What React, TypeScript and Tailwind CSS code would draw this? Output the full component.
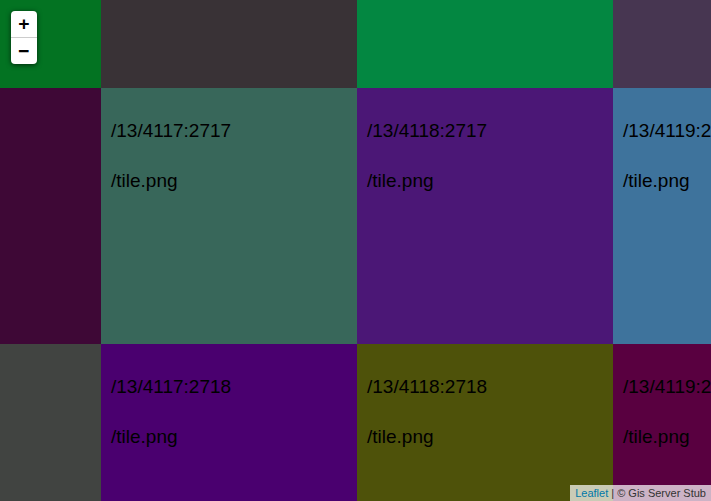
import React from "react";

type Tile = { bg: string; label?: string };

const rows: { h: string; tiles: Tile[] }[] = [
  {
    h: "h-[88px]",
    tiles: [
      { bg: "bg-[#037322]" },
      { bg: "bg-[#393236]" },
      { bg: "bg-[#038741]" },
      { bg: "bg-[#473651]" },
    ],
  },
  {
    h: "h-[256px]",
    tiles: [
      { bg: "bg-[#3e0836]" },
      { bg: "bg-[#38675a]", label: "/13/4117:2717" },
      { bg: "bg-[#4b1776]", label: "/13/4118:2717" },
      { bg: "bg-[#3e739c]", label: "/13/4119:2717" },
    ],
  },
  {
    h: "h-[157px]",
    tiles: [
      { bg: "bg-[#414441]" },
      { bg: "bg-[#4a006f]", label: "/13/4117:2718" },
      { bg: "bg-[#4e520a]", label: "/13/4118:2718" },
      { bg: "bg-[#590040]", label: "/13/4119:2718" },
    ],
  },
];

const widths = ["w-[101px]", "w-[256px]", "w-[256px]", "w-[98px]"];

const TileBox = ({ tile, w }: { tile: Tile; w: string }) => (
  <div className={`${w} h-full shrink-0 overflow-hidden ${tile.bg}`}>
    {tile.label && (
      <div className="flex flex-col gap-[28px] pl-[10px] pt-[32px] text-[19px] leading-[22px] text-black whitespace-nowrap">
        <p>{tile.label}</p>
        <p>/tile.png</p>
      </div>
    )}
  </div>
);

const App = () => {
  return (
    <div
      className="relative w-[711px] h-[501px] overflow-hidden bg-[#ddd]"
      style={{ fontFamily: '"Liberation Sans", Arial, sans-serif' }}
    >
      <div className="flex flex-col">
        {rows.map((row, i) => (
          <div key={i} className={`flex ${row.h}`}>
            {row.tiles.map((t, j) => (
              <TileBox key={j} tile={t} w={widths[j]} />
            ))}
          </div>
        ))}
      </div>

      {/* zoom control */}
      <div className="absolute left-[11px] top-[11px] flex flex-col rounded-[4px] bg-white shadow-[0_1px_5px_rgba(0,0,0,0.65)]">
        <div className="flex h-[27px] w-[26px] items-center justify-center border-b border-[#ccc] font-['DejaVu_Sans_Mono',monospace] text-[18px] font-bold leading-[26px] text-black">
          +
        </div>
        <div className="flex h-[26px] w-[26px] items-center justify-center font-['DejaVu_Sans_Mono',monospace] text-[18px] font-bold leading-[26px] text-black">
          −
        </div>
      </div>

      {/* attribution */}
      <div className="absolute bottom-0 right-0 bg-[rgba(255,255,255,0.7)] px-[5px] text-[11px] leading-[16px] text-[#333]">
        <span className="text-[#0078a8]">Leaflet</span> | © Gis Server Stub
      </div>
    </div>
  );
};

export default App;
